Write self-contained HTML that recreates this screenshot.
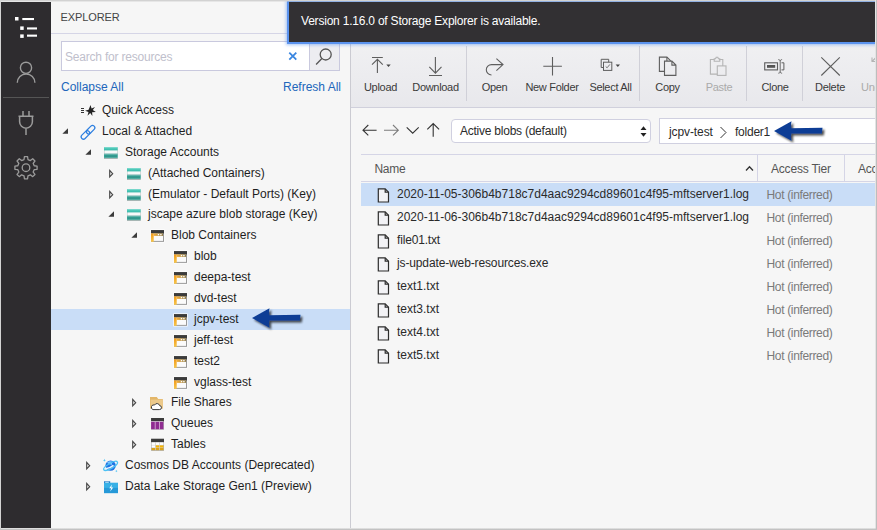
<!DOCTYPE html>
<html><head><meta charset="utf-8">
<style>
html,body{margin:0;padding:0;}
body{width:877px;height:530px;overflow:hidden;background:#f6f6f6;font-family:"Liberation Sans",sans-serif;font-size:12px;color:#1e1e1e;position:relative;}
.abs{position:absolute;}
#frameT{left:0;top:0;width:877px;height:2px;background:linear-gradient(#d2d2d2 0,#d2d2d2 50%,rgba(210,210,210,.45) 50%);}
#frameL{left:0;top:0;width:1px;height:530px;background:#d4d4d4;}
#frameR{left:875px;top:0;width:2px;height:530px;background:linear-gradient(90deg,#e4e4e4 0,#e4e4e4 45%,#bdbdbd 45%);}
#frameB{left:0;top:528px;width:877px;height:2px;background:linear-gradient(rgba(192,192,192,.45) 0,rgba(192,192,192,.45) 50%,#c2c2c2 50%);}
#act{left:1px;top:2px;width:50px;height:526px;background:#2e2c2f;}
#exp{left:51px;top:2px;width:299px;height:526px;background:#f6f6f6;}
#expHead{left:51px;top:2px;width:299px;height:31px;border-bottom:1px solid #d5d5e6;background:#f6f6f6;}
#expTitle{left:60.5px;top:11px;font-size:11px;color:#444;letter-spacing:-0.1px;}
#split{left:350px;top:2px;width:1px;height:526px;background:#cbcbd2;}
#search{left:61px;top:41px;width:249px;height:30px;border:1px solid #c9c9de;background:#fff;box-sizing:border-box;}
#search span{position:absolute;left:3px;top:8px;letter-spacing:-0.2px;color:#c0c0cc;font-size:12px;}
#sbtn{left:309px;top:41px;width:31px;height:30px;border:1px solid #c9c9de;background:#ededf1;box-sizing:border-box;}
.link{color:#2166bb;font-size:12px;}
.row{position:absolute;left:51px;width:299px;height:21px;}
.row .t{position:absolute;top:3px;font-size:12px;color:#1e1e1e;white-space:nowrap;}
.row.sel{background:#c9ddf7;}
.tw{position:absolute;top:6px;}
.ic{position:absolute;top:2px;}
#notif{left:289px;top:2px;width:588px;height:40px;background:#323033;box-shadow:0 0 0 2px #5b93ee,0 0 3px 3px rgba(91,147,238,.55);}
#notif span{position:absolute;left:12px;top:12px;color:#fff;font-size:12px;letter-spacing:-0.21px;white-space:nowrap;}
#tb{left:351px;top:44px;width:526px;height:63px;background:linear-gradient(#f0f0f2,#e8e8ec);border-bottom:1px solid #d0d0dc;}
.tbl{position:absolute;top:81px;font-size:11px;color:#3a3a3a;letter-spacing:-0.3px;white-space:nowrap;transform:translateX(-50%);}
.tbl.dis{color:#aaa;}
.sep{position:absolute;top:46px;width:1px;height:55px;background:#d0d0d8;}
.tbi{position:absolute;}
#main{left:362px;top:108px;width:515px;height:420px;background:#f6f6f6;}
#gut{left:351px;top:108px;width:11px;height:420px;background:#f6f6f6;}
.inp{position:absolute;top:119px;height:24px;border:1px solid #d0d0e0;background:#fff;box-sizing:border-box;border-radius:4px;font-size:12px;color:#2b2b2b;letter-spacing:-0.24px;white-space:nowrap;overflow:hidden;}
#th{left:361px;top:154px;width:516px;height:28px;border-top:1px solid #d5d5e6;border-bottom:1px solid #d5d5e6;box-sizing:border-box;}
.thc{position:absolute;top:162px;font-size:12px;color:#555;white-space:nowrap;}
.fr{position:absolute;left:361px;width:516px;height:23px;}
.fr.sel{background:#c9ddf7;}
.fr .n{position:absolute;left:36px;top:4px;font-size:12px;color:#2a2a2a;white-space:nowrap;}
.fr .a{position:absolute;left:405.500px;top:5px;font-size:12px;color:#7a7a7a;white-space:nowrap;letter-spacing:-0.34px;}
.fr svg{position:absolute;left:16.300px;top:4.500px;}
</style></head><body>
<div class="abs" id="act"></div>
<svg class="abs" style="left:1px;top:2px" width="50" height="200" viewBox="1 2 50 200" fill="none">
<g fill="#fff"><rect x="15" y="17" width="3.500" height="3.500"/><rect x="22.300" y="18" width="11.700" height="2.100"/><rect x="20.200" y="26.400" width="3.500" height="3.500"/><rect x="27" y="27.400" width="10" height="2.100"/><rect x="20.200" y="34.400" width="3.500" height="3.500"/><rect x="27" y="34.600" width="10" height="2.100"/></g>
<g stroke="#9b9b9b" stroke-width="1.400"><circle cx="26" cy="67.800" r="5.600"/><path d="M17.300 82.800a8.800 8.800 0 0 1 17.600 0"/></g>
<path d="M3 97.500h46" stroke="#555" stroke-width="1"/>
<g stroke="#9b9b9b" stroke-width="1.500"><path d="M23 111v5M29 111v5M18.500 116.300h15M19.600 116.300v5.500a6.400 6.400 0 0 0 12.800 0v-5.500M26 128.500v6.600"/></g>
<g stroke="#9b9b9b" stroke-width="1.300" stroke-linejoin="round"><circle cx="26" cy="167.700" r="3.800"/>
<path d="M24.04 159.53 L24.42 156.61 L27.58 156.61 L27.96 159.53 L30.39 160.54 L32.72 158.74 L34.96 160.98 L33.16 163.31 L34.17 165.74 L37.09 166.12 L37.09 169.28 L34.17 169.66 L33.16 172.09 L34.96 174.42 L32.72 176.66 L30.39 174.86 L27.96 175.87 L27.58 178.79 L24.42 178.79 L24.04 175.87 L21.61 174.86 L19.28 176.66 L17.04 174.42 L18.84 172.09 L17.83 169.66 L14.91 169.28 L14.91 166.12 L17.83 165.74 L18.84 163.31 L17.04 160.98 L19.28 158.74 L21.61 160.54Z"/></g>
</svg>
<div class="abs" id="exp"></div>
<div class="abs" id="expHead"></div>
<div class="abs" id="expTitle">EXPLORER</div>
<div class="abs" id="search"><span>Search for resources</span></div>
<div class="abs" id="sbtn"></div>
<svg class="abs" style="left:287px;top:50px" width="12" height="12" viewBox="0 0 12 12"><path d="M2.300 2.600l7 7M9.300 2.600l-7 7" stroke="#3a86e0" stroke-width="1.800" fill="none"/></svg>
<svg class="abs" style="left:314px;top:46px" width="20" height="20" viewBox="0 0 20 20" fill="none" stroke="#555" stroke-width="1.300"><circle cx="11.700" cy="8.500" r="5.500"/><path d="M7.900 12.500l-5.800 6"/></svg>
<div class="abs link" style="left:61px;top:80px;">Collapse All</div>
<div class="abs link" style="left:283px;top:80px;">Refresh All</div>
<!--TREE-->
<div class="row" style="top:100px"><svg class="ic" style="left:29px" width="17" height="16" viewBox="0 0 17 16"><g stroke="#333" stroke-width="1"><path d="M1 6.5h3M1 8.5h3M1 10.5h3"/></g><path d="M10.5 3l1.1 3.6 3.4-1.500-2.200 3 3 2-3.700.2.300 3.700-2.200-2.900-2.700 2.600 1-3.600-3.400-1.400 3.500-1z" fill="#222"/></svg><span class="t" style="left:51px">Quick Access</span></div>
<div class="row" style="top:121px"><svg class="tw" style="left:10px;top:6px" width="8" height="8" viewBox="0 0 8 8"><path d="M7 1.200v5.600H1.400z" fill="#3b3b3b"/></svg><svg class="ic" style="left:28px" width="17" height="17" viewBox="0 0 17 17"><g fill="none" stroke="#2d7fe0" stroke-width="1.250"><rect x="-2.300" y="-5" width="4.600" height="10" rx="2.300" transform="translate(11.600 6.700) rotate(45)"/><rect x="-2.300" y="-5" width="4.600" height="10" rx="2.300" transform="translate(6.400 11.900) rotate(45)"/></g></svg><span class="t" style="left:51px">Local &amp; Attached</span></div>
<div class="row" style="top:142px"><svg class="tw" style="left:33px;top:6px" width="8" height="8" viewBox="0 0 8 8"><path d="M7 1.200v5.600H1.400z" fill="#3b3b3b"/></svg><svg class="ic" style="left:51px" width="17" height="16" viewBox="0 0 17 16"><defs><linearGradient id="sg1" x1="0" y1="0" x2="0" y2="1"><stop offset="0" stop-color="#5fd3c4"/><stop offset="1" stop-color="#36b8a8"/></linearGradient><linearGradient id="sg2" x1="0" y1="0" x2="0" y2="1"><stop offset="0" stop-color="#2e9f93"/><stop offset="0.7" stop-color="#3db3a5"/><stop offset="1" stop-color="#8a9a98"/></linearGradient></defs><rect x="2" y="3.200" width="13.700" height="11.400" fill="#b9c3c2"/><rect x="2.500" y="3.200" width="12.700" height="11" fill="#f7f9f9"/><rect x="2" y="3.200" width="13.700" height="3.200" fill="url(#sg1)"/><rect x="2" y="9.600" width="13.700" height="5" fill="url(#sg2)"/><rect x="2" y="9.600" width="13.700" height="0.700" fill="#c9d2d1"/><rect x="2.500" y="11.700" width="12.700" height="0.800" fill="#2c7d76"/></svg><span class="t" style="left:74px">Storage Accounts</span></div>
<div class="row" style="top:163px"><svg class="tw" style="left:57px;top:4px" width="7" height="13" viewBox="0 0 7 13"><path d="M1.700 3.500l3 3.200-3 3.200z" fill="none" stroke="#484848" stroke-width="1.150"/></svg><svg class="ic" style="left:74px" width="17" height="16" viewBox="0 0 17 16"><defs><linearGradient id="sg1" x1="0" y1="0" x2="0" y2="1"><stop offset="0" stop-color="#5fd3c4"/><stop offset="1" stop-color="#36b8a8"/></linearGradient><linearGradient id="sg2" x1="0" y1="0" x2="0" y2="1"><stop offset="0" stop-color="#2e9f93"/><stop offset="0.7" stop-color="#3db3a5"/><stop offset="1" stop-color="#8a9a98"/></linearGradient></defs><rect x="2" y="3.200" width="13.700" height="11.400" fill="#b9c3c2"/><rect x="2.500" y="3.200" width="12.700" height="11" fill="#f7f9f9"/><rect x="2" y="3.200" width="13.700" height="3.200" fill="url(#sg1)"/><rect x="2" y="9.600" width="13.700" height="5" fill="url(#sg2)"/><rect x="2" y="9.600" width="13.700" height="0.700" fill="#c9d2d1"/><rect x="2.500" y="11.700" width="12.700" height="0.800" fill="#2c7d76"/></svg><span class="t" style="left:97px">(Attached Containers)</span></div>
<div class="row" style="top:184px"><svg class="tw" style="left:57px;top:4px" width="7" height="13" viewBox="0 0 7 13"><path d="M1.700 3.500l3 3.200-3 3.200z" fill="none" stroke="#484848" stroke-width="1.150"/></svg><svg class="ic" style="left:74px" width="17" height="16" viewBox="0 0 17 16"><defs><linearGradient id="sg1" x1="0" y1="0" x2="0" y2="1"><stop offset="0" stop-color="#5fd3c4"/><stop offset="1" stop-color="#36b8a8"/></linearGradient><linearGradient id="sg2" x1="0" y1="0" x2="0" y2="1"><stop offset="0" stop-color="#2e9f93"/><stop offset="0.7" stop-color="#3db3a5"/><stop offset="1" stop-color="#8a9a98"/></linearGradient></defs><rect x="2" y="3.200" width="13.700" height="11.400" fill="#b9c3c2"/><rect x="2.500" y="3.200" width="12.700" height="11" fill="#f7f9f9"/><rect x="2" y="3.200" width="13.700" height="3.200" fill="url(#sg1)"/><rect x="2" y="9.600" width="13.700" height="5" fill="url(#sg2)"/><rect x="2" y="9.600" width="13.700" height="0.700" fill="#c9d2d1"/><rect x="2.500" y="11.700" width="12.700" height="0.800" fill="#2c7d76"/></svg><span class="t" style="left:97px">(Emulator - Default Ports) (Key)</span></div>
<div class="row" style="top:204px"><svg class="tw" style="left:56px;top:6px" width="8" height="8" viewBox="0 0 8 8"><path d="M7 1.200v5.600H1.400z" fill="#3b3b3b"/></svg><svg class="ic" style="left:74px" width="17" height="16" viewBox="0 0 17 16"><defs><linearGradient id="sg1" x1="0" y1="0" x2="0" y2="1"><stop offset="0" stop-color="#5fd3c4"/><stop offset="1" stop-color="#36b8a8"/></linearGradient><linearGradient id="sg2" x1="0" y1="0" x2="0" y2="1"><stop offset="0" stop-color="#2e9f93"/><stop offset="0.7" stop-color="#3db3a5"/><stop offset="1" stop-color="#8a9a98"/></linearGradient></defs><rect x="2" y="3.200" width="13.700" height="11.400" fill="#b9c3c2"/><rect x="2.500" y="3.200" width="12.700" height="11" fill="#f7f9f9"/><rect x="2" y="3.200" width="13.700" height="3.200" fill="url(#sg1)"/><rect x="2" y="9.600" width="13.700" height="5" fill="url(#sg2)"/><rect x="2" y="9.600" width="13.700" height="0.700" fill="#c9d2d1"/><rect x="2.500" y="11.700" width="12.700" height="0.800" fill="#2c7d76"/></svg><span class="t" style="left:97px">jscape azure blob storage (Key)</span></div>
<div class="row" style="top:225px"><svg class="tw" style="left:79px;top:6px" width="8" height="8" viewBox="0 0 8 8"><path d="M7 1.200v5.600H1.400z" fill="#3b3b3b"/></svg><svg class="ic" style="left:98px" width="16" height="16" viewBox="0 0 16 16"><defs><linearGradient id="bg1" x1="0" y1="0" x2="0" y2="1"><stop offset="0" stop-color="#f09a1c"/><stop offset="1" stop-color="#f8c64a"/></linearGradient><linearGradient id="bg2" x1="0" y1="0" x2="1" y2="0"><stop offset="0" stop-color="#f3ae38"/><stop offset="0.45" stop-color="#c79a46"/><stop offset="1" stop-color="#8c7846"/></linearGradient></defs><rect x="1.300" y="2.400" width="14.400" height="13.100" fill="#fdfdfd"/><rect x="2" y="3.100" width="13" height="11.700" fill="#8f8f8f"/><rect x="2" y="6.300" width="12.100" height="7.600" fill="#fbfbfb"/><rect x="2" y="3.100" width="13" height="3.300" fill="#3b3b3b"/><rect x="2" y="6.400" width="2.700" height="8.400" fill="url(#bg1)"/><rect x="4.700" y="6.400" width="9.400" height="2.500" fill="url(#bg2)"/><rect x="8.800" y="7" width="1.400" height="1.300" fill="#fff"/><rect x="11.200" y="7" width="1.400" height="1.300" fill="#fff"/></svg><span class="t" style="left:120px">Blob Containers</span></div>
<div class="row" style="top:246px"><svg class="ic" style="left:121px" width="16" height="16" viewBox="0 0 16 16"><defs><linearGradient id="bg1" x1="0" y1="0" x2="0" y2="1"><stop offset="0" stop-color="#f09a1c"/><stop offset="1" stop-color="#f8c64a"/></linearGradient><linearGradient id="bg2" x1="0" y1="0" x2="1" y2="0"><stop offset="0" stop-color="#f3ae38"/><stop offset="0.45" stop-color="#c79a46"/><stop offset="1" stop-color="#8c7846"/></linearGradient></defs><rect x="1.300" y="2.400" width="14.400" height="13.100" fill="#fdfdfd"/><rect x="2" y="3.100" width="13" height="11.700" fill="#8f8f8f"/><rect x="2" y="6.300" width="12.100" height="7.600" fill="#fbfbfb"/><rect x="2" y="3.100" width="13" height="3.300" fill="#3b3b3b"/><rect x="2" y="6.400" width="2.700" height="8.400" fill="url(#bg1)"/><rect x="4.700" y="6.400" width="9.400" height="2.500" fill="url(#bg2)"/><rect x="8.800" y="7" width="1.400" height="1.300" fill="#fff"/><rect x="11.200" y="7" width="1.400" height="1.300" fill="#fff"/></svg><span class="t" style="left:143px">blob</span></div>
<div class="row" style="top:267px"><svg class="ic" style="left:121px" width="16" height="16" viewBox="0 0 16 16"><defs><linearGradient id="bg1" x1="0" y1="0" x2="0" y2="1"><stop offset="0" stop-color="#f09a1c"/><stop offset="1" stop-color="#f8c64a"/></linearGradient><linearGradient id="bg2" x1="0" y1="0" x2="1" y2="0"><stop offset="0" stop-color="#f3ae38"/><stop offset="0.45" stop-color="#c79a46"/><stop offset="1" stop-color="#8c7846"/></linearGradient></defs><rect x="1.300" y="2.400" width="14.400" height="13.100" fill="#fdfdfd"/><rect x="2" y="3.100" width="13" height="11.700" fill="#8f8f8f"/><rect x="2" y="6.300" width="12.100" height="7.600" fill="#fbfbfb"/><rect x="2" y="3.100" width="13" height="3.300" fill="#3b3b3b"/><rect x="2" y="6.400" width="2.700" height="8.400" fill="url(#bg1)"/><rect x="4.700" y="6.400" width="9.400" height="2.500" fill="url(#bg2)"/><rect x="8.800" y="7" width="1.400" height="1.300" fill="#fff"/><rect x="11.200" y="7" width="1.400" height="1.300" fill="#fff"/></svg><span class="t" style="left:143px">deepa-test</span></div>
<div class="row" style="top:288px"><svg class="ic" style="left:121px" width="16" height="16" viewBox="0 0 16 16"><defs><linearGradient id="bg1" x1="0" y1="0" x2="0" y2="1"><stop offset="0" stop-color="#f09a1c"/><stop offset="1" stop-color="#f8c64a"/></linearGradient><linearGradient id="bg2" x1="0" y1="0" x2="1" y2="0"><stop offset="0" stop-color="#f3ae38"/><stop offset="0.45" stop-color="#c79a46"/><stop offset="1" stop-color="#8c7846"/></linearGradient></defs><rect x="1.300" y="2.400" width="14.400" height="13.100" fill="#fdfdfd"/><rect x="2" y="3.100" width="13" height="11.700" fill="#8f8f8f"/><rect x="2" y="6.300" width="12.100" height="7.600" fill="#fbfbfb"/><rect x="2" y="3.100" width="13" height="3.300" fill="#3b3b3b"/><rect x="2" y="6.400" width="2.700" height="8.400" fill="url(#bg1)"/><rect x="4.700" y="6.400" width="9.400" height="2.500" fill="url(#bg2)"/><rect x="8.800" y="7" width="1.400" height="1.300" fill="#fff"/><rect x="11.200" y="7" width="1.400" height="1.300" fill="#fff"/></svg><span class="t" style="left:143px">dvd-test</span></div>
<div class="row sel" style="top:309px"><svg class="ic" style="left:121px" width="16" height="16" viewBox="0 0 16 16"><defs><linearGradient id="bg1" x1="0" y1="0" x2="0" y2="1"><stop offset="0" stop-color="#f09a1c"/><stop offset="1" stop-color="#f8c64a"/></linearGradient><linearGradient id="bg2" x1="0" y1="0" x2="1" y2="0"><stop offset="0" stop-color="#f3ae38"/><stop offset="0.45" stop-color="#c79a46"/><stop offset="1" stop-color="#8c7846"/></linearGradient></defs><rect x="1.300" y="2.400" width="14.400" height="13.100" fill="#fdfdfd"/><rect x="2" y="3.100" width="13" height="11.700" fill="#8f8f8f"/><rect x="2" y="6.300" width="12.100" height="7.600" fill="#fbfbfb"/><rect x="2" y="3.100" width="13" height="3.300" fill="#3b3b3b"/><rect x="2" y="6.400" width="2.700" height="8.400" fill="url(#bg1)"/><rect x="4.700" y="6.400" width="9.400" height="2.500" fill="url(#bg2)"/><rect x="8.800" y="7" width="1.400" height="1.300" fill="#fff"/><rect x="11.200" y="7" width="1.400" height="1.300" fill="#fff"/></svg><span class="t" style="left:143px">jcpv-test</span><svg style="position:absolute;left:199px;top:-3px;overflow:visible" width="56" height="26" viewBox="0 0 56 26"><defs><filter id="sh1" x="-20%" y="-20%" width="140%" height="160%"><feGaussianBlur in="SourceAlpha" stdDeviation="0.9"/><feOffset dx="1.500" dy="2"/><feComponentTransfer><feFuncA type="linear" slope="0.7"/></feComponentTransfer><feMerge><feMergeNode/><feMergeNode in="SourceGraphic"/></feMerge></filter></defs><path d="M2 12L19.500 2.300C18.900 5 18.900 7 19.300 9.200L50.500 8.800L49.800 14.600L19.300 14.400C18.900 17 18.900 19 19.500 21.700z" fill="#0e3d95" filter="url(#sh1)"/></svg></div>
<div class="row" style="top:330px"><svg class="ic" style="left:121px" width="16" height="16" viewBox="0 0 16 16"><defs><linearGradient id="bg1" x1="0" y1="0" x2="0" y2="1"><stop offset="0" stop-color="#f09a1c"/><stop offset="1" stop-color="#f8c64a"/></linearGradient><linearGradient id="bg2" x1="0" y1="0" x2="1" y2="0"><stop offset="0" stop-color="#f3ae38"/><stop offset="0.45" stop-color="#c79a46"/><stop offset="1" stop-color="#8c7846"/></linearGradient></defs><rect x="1.300" y="2.400" width="14.400" height="13.100" fill="#fdfdfd"/><rect x="2" y="3.100" width="13" height="11.700" fill="#8f8f8f"/><rect x="2" y="6.300" width="12.100" height="7.600" fill="#fbfbfb"/><rect x="2" y="3.100" width="13" height="3.300" fill="#3b3b3b"/><rect x="2" y="6.400" width="2.700" height="8.400" fill="url(#bg1)"/><rect x="4.700" y="6.400" width="9.400" height="2.500" fill="url(#bg2)"/><rect x="8.800" y="7" width="1.400" height="1.300" fill="#fff"/><rect x="11.200" y="7" width="1.400" height="1.300" fill="#fff"/></svg><span class="t" style="left:143px">jeff-test</span></div>
<div class="row" style="top:351px"><svg class="ic" style="left:121px" width="16" height="16" viewBox="0 0 16 16"><defs><linearGradient id="bg1" x1="0" y1="0" x2="0" y2="1"><stop offset="0" stop-color="#f09a1c"/><stop offset="1" stop-color="#f8c64a"/></linearGradient><linearGradient id="bg2" x1="0" y1="0" x2="1" y2="0"><stop offset="0" stop-color="#f3ae38"/><stop offset="0.45" stop-color="#c79a46"/><stop offset="1" stop-color="#8c7846"/></linearGradient></defs><rect x="1.300" y="2.400" width="14.400" height="13.100" fill="#fdfdfd"/><rect x="2" y="3.100" width="13" height="11.700" fill="#8f8f8f"/><rect x="2" y="6.300" width="12.100" height="7.600" fill="#fbfbfb"/><rect x="2" y="3.100" width="13" height="3.300" fill="#3b3b3b"/><rect x="2" y="6.400" width="2.700" height="8.400" fill="url(#bg1)"/><rect x="4.700" y="6.400" width="9.400" height="2.500" fill="url(#bg2)"/><rect x="8.800" y="7" width="1.400" height="1.300" fill="#fff"/><rect x="11.200" y="7" width="1.400" height="1.300" fill="#fff"/></svg><span class="t" style="left:143px">test2</span></div>
<div class="row" style="top:372px"><svg class="ic" style="left:121px" width="16" height="16" viewBox="0 0 16 16"><defs><linearGradient id="bg1" x1="0" y1="0" x2="0" y2="1"><stop offset="0" stop-color="#f09a1c"/><stop offset="1" stop-color="#f8c64a"/></linearGradient><linearGradient id="bg2" x1="0" y1="0" x2="1" y2="0"><stop offset="0" stop-color="#f3ae38"/><stop offset="0.45" stop-color="#c79a46"/><stop offset="1" stop-color="#8c7846"/></linearGradient></defs><rect x="1.300" y="2.400" width="14.400" height="13.100" fill="#fdfdfd"/><rect x="2" y="3.100" width="13" height="11.700" fill="#8f8f8f"/><rect x="2" y="6.300" width="12.100" height="7.600" fill="#fbfbfb"/><rect x="2" y="3.100" width="13" height="3.300" fill="#3b3b3b"/><rect x="2" y="6.400" width="2.700" height="8.400" fill="url(#bg1)"/><rect x="4.700" y="6.400" width="9.400" height="2.500" fill="url(#bg2)"/><rect x="8.800" y="7" width="1.400" height="1.300" fill="#fff"/><rect x="11.200" y="7" width="1.400" height="1.300" fill="#fff"/></svg><span class="t" style="left:143px">vglass-test</span></div>
<div class="row" style="top:392px"><svg class="tw" style="left:80px;top:4px" width="7" height="13" viewBox="0 0 7 13"><path d="M1.700 3.500l3 3.200-3 3.200z" fill="none" stroke="#484848" stroke-width="1.150"/></svg><svg class="ic" style="left:98px" width="16" height="18" viewBox="0 0 16 18"><g transform="translate(0 1)"><path d="M1 2.100h6.800l1.400 1.800h4.600v9.500H1z" fill="#e3b669"/><path d="M1.600 4.600h12.200v8.800H1.600z" fill="#ecc98a"/><path d="M4 14.600h6.300a2 2 0 0 0 .3-4 2.700 2.700 0 0 0-5-.6 2.300 2.300 0 0 0-1.600 4.600z" fill="#fff" stroke="#3a3a3a" stroke-width="1"/></g></svg><span class="t" style="left:120px">File Shares</span></div>
<div class="row" style="top:413px"><svg class="tw" style="left:80px;top:4px" width="7" height="13" viewBox="0 0 7 13"><path d="M1.700 3.500l3 3.200-3 3.200z" fill="none" stroke="#484848" stroke-width="1.150"/></svg><svg class="ic" style="left:98px" width="16" height="16" viewBox="0 0 16 16"><rect x="2.100" y="3" width="12.900" height="11.600" fill="#9a9a9a"/><rect x="2.100" y="3" width="12.900" height="3.300" fill="#3b3b3b"/><rect x="2.100" y="6.300" width="12.300" height="7.900" fill="#e6cfe6"/><rect x="2.100" y="6.900" width="3.700" height="7.300" fill="#8f2d91"/><rect x="6.500" y="6.900" width="3.500" height="7.300" fill="#8f2d91"/><rect x="10.700" y="6.900" width="3.700" height="7.300" fill="#8f2d91"/></svg><span class="t" style="left:120px">Queues</span></div>
<div class="row" style="top:434px"><svg class="tw" style="left:80px;top:4px" width="7" height="13" viewBox="0 0 7 13"><path d="M1.700 3.500l3 3.200-3 3.200z" fill="none" stroke="#484848" stroke-width="1.150"/></svg><svg class="ic" style="left:98px" width="16" height="16" viewBox="0 0 16 16"><rect x="2.100" y="2.800" width="12.900" height="11.900" fill="#9a9a9a"/><rect x="2.100" y="2.800" width="12.900" height="3.300" fill="#3b3b3b"/><rect x="2.600" y="6.100" width="11.900" height="8.100" fill="#cfcfcf"/><g fill="#fff"><rect x="2.600" y="6.600" width="3.500" height="2.300"/><rect x="6.800" y="6.600" width="3.500" height="2.300"/><rect x="11" y="6.600" width="3.500" height="2.300"/><rect x="2.600" y="9.400" width="3.500" height="2.100"/></g><g fill="#f7b500"><rect x="6.800" y="9.400" width="3.500" height="2.100"/><rect x="11" y="9.400" width="3.500" height="2.100"/></g><g fill="#dba31c"><rect x="2.600" y="12" width="3.500" height="2.200"/><rect x="6.800" y="12" width="3.500" height="2.200"/><rect x="11" y="12" width="3.500" height="2.200"/></g></svg><span class="t" style="left:120px">Tables</span></div>
<div class="row" style="top:455px"><svg class="tw" style="left:34px;top:4px" width="7" height="13" viewBox="0 0 7 13"><path d="M1.700 3.500l3 3.200-3 3.200z" fill="none" stroke="#484848" stroke-width="1.150"/></svg><svg class="ic" style="left:51px" width="17" height="17" viewBox="0 0 17 17"><circle cx="8.600" cy="8.600" r="5.200" fill="#2272e2"/><path d="M5 5.800c1.600-1.700 4.200-2 6-.8-1.200.7-1.400 1.800-.5 2.500-1.700.5-3.700 0-5.500-1.700z" fill="#7cc4ff"/><ellipse cx="8.600" cy="8.900" rx="7.800" ry="2.500" transform="rotate(-30 8.600 8.900)" fill="none" stroke="#4cc2f4" stroke-width="1.300"/><path d="M3.400 11.300c2 .4 5-.6 7.600-2.600" stroke="#eaf6ff" stroke-width="1.500" fill="none" stroke-linecap="round"/><path d="M2.400 1.800l.5 1.100 1 .4-1 .4-.5 1.100-.4-1.100-1.100-.4 1.100-.4z" fill="#4cc2f4"/><path d="M14.300 12.800l.4.900.9.300-.9.400-.4.900-.3-.9-.9-.4.900-.3z" fill="#4cc2f4"/></svg><span class="t" style="left:74px">Cosmos DB Accounts (Deprecated)</span></div>
<div class="row" style="top:476px"><svg class="tw" style="left:34px;top:4px" width="7" height="13" viewBox="0 0 7 13"><path d="M1.700 3.500l3 3.200-3 3.200z" fill="none" stroke="#484848" stroke-width="1.150"/></svg><svg class="ic" style="left:52px" width="16" height="17" viewBox="0 0 16 17"><g transform="translate(0 0.700)"><path d="M1 2.600h6.200v2H1z" fill="#1b74c4"/><rect x="2.200" y="3.100" width="3.600" height="1.100" fill="#dbeefb"/><path d="M1 4h14v10.400H1z" fill="#38b0e6"/><path d="M1 9.200h14v5.200H1z" fill="#2699d8"/><path d="M8.900 5.800L6.300 9.500h1.900l-1 3.300 3-4.100H8.300z" fill="#fff"/></g></svg><span class="t" style="left:74px">Data Lake Storage Gen1 (Preview)</span></div>
<!--/TREE-->
<div class="abs" id="split"></div>
<div class="abs" id="gut"></div>
<div class="abs" id="main"></div>
<div class="abs" id="tb"></div>
<!--TOOLBAR-->
<svg class="abs" style="left:351px;top:44px" width="526" height="54" viewBox="351 44 526 54" fill="none" stroke="#5e5e5e" stroke-width="1.1"><path d="M372 57.500h10.800M377.400 59.300v13.600M372 64.700l5.400-5.400 5.400 5.400"/><path d="M386.300 64.600h4.400l-2.200 2.400z" fill="#444" stroke="none"/><path d="M435.400 57v16M429.300 66.900l6.100 6.200 6.100-6.200M429 75.500h13"/><path d="M496.400 58.600l6.600 6-6.600 6M503 64.600h-11.500a5.200 5.200 0 0 0 0 10.400"/><path d="M543.300 66.300h18.600M552.500 57v18.500"/><path d="M603.500 67.500h-2.300v-8.200h7.500v2.900" stroke-width="1"/><rect x="603.500" y="62.200" width="8.300" height="8.200" stroke-width="1"/><path d="M605.700 66.500l1.400 1.300 2.800-3.400" stroke="#777" stroke-width="1"/><path d="M615.600 64.600h4.400l-2.200 2.400z" fill="#444" stroke="none"/><path d="M664.400 71.400h-5v-14.300h7.500l3.800 3.800" /><path d="M664.500 61.100h7.400l4 4v10.300h-11.400z M671.900 61.100v4h4"/><path d="M666.900 57.100v3.800"/><g stroke="#b4b4b4"><path d="M717.300 74.100h-6.900v-14.600h3.800M719 59.500h3.800v6.400"/><path d="M714.200 61.300v-2.600h1.400l.6-1.500h1.600l.6 1.500h1.400v2.600z"/><rect x="717.300" y="65.900" width="8.700" height="9.500"/></g><rect x="764.700" y="62.800" width="12.800" height="7.100"/><rect x="767" y="65" width="8.200" height="2.800" fill="#555" stroke="none"/><path d="M778.300 59.600c1.300 0 1.900.6 1.900 1.600v10.400c0 1-.6 1.600-1.900 1.600M782.100 59.600c-1.300 0-1.900.6-1.900 1.600M782.100 73.200c-1.300 0-1.900-.6-1.900-1.600" stroke-width="0.9"/><path d="M781.500 62.800h2.400v7.100h-2.400" stroke-width="1"/><path d="M821.300 57.300l18.500 18.200M839.800 57.300l-18.500 18.200"/><g stroke="#b4b4b4"><path d="M872 57.500v4h4M872 61.500l4-4"/></g></svg>
<div class="sep" style="left:466px"></div>
<div class="sep" style="left:639px"></div>
<div class="sep" style="left:746px"></div>
<div class="sep" style="left:802px"></div>
<div class="tbl" style="left:380.5px">Upload</div>
<div class="tbl" style="left:435.5px">Download</div>
<div class="tbl" style="left:494.5px">Open</div>
<div class="tbl" style="left:552px">New Folder</div>
<div class="tbl" style="left:610.5px">Select All</div>
<div class="tbl" style="left:667.5px">Copy</div>
<div class="tbl dis" style="left:719px">Paste</div>
<div class="tbl" style="left:775px">Clone</div>
<div class="tbl" style="left:830px">Delete</div>
<div class="tbl dis" style="left:861px;transform:none">Undelete</div>
<!--/TOOLBAR-->
<div class="abs" id="notif"><span>Version 1.16.0 of Storage Explorer is available.</span></div>
<!--NAV-->
<svg class="abs" style="left:360px;top:120px" width="84" height="22" viewBox="360 120 84 22" fill="none" stroke-width="1.1"><path d="M363 130.200h13.600M368.300 125l-5.300 5.200 5.300 5.200" stroke="#333"/><path d="M384 130.200h14M393 125l5.300 5.200-5.300 5.200" stroke="#7c7c7c"/><path d="M406.700 127.400l6 5.800 6-5.800" stroke="#333"/><path d="M433.200 123.500v13.200M427.300 129.400l5.900-5.900 5.900 5.900" stroke="#333"/></svg><div class="inp" style="left:451px;width:200px;height:24px"><span style="position:absolute;left:8px;top:4px">Active blobs (default)</span><svg style="position:absolute;left:187px;top:4.500px" width="9" height="13" viewBox="0 0 9 13"><path d="M1.500 5l3-3.800 3 3.800zM1.500 8l3 3.800 3-3.800z" fill="#222"/></svg></div><div class="inp" style="left:659px;top:118px;height:26px;width:230px;border-radius:0;letter-spacing:-0.1px"><span style="position:absolute;left:9px;top:6px">jcpv-test</span><svg style="position:absolute;left:59px;top:7px" width="9" height="13" viewBox="0 0 9 13"><path d="M1.500 1l5.500 5.500-5.500 5.500" fill="none" stroke="#333" stroke-width="1"/></svg><span style="position:absolute;left:75px;top:6px;letter-spacing:-0.24px">folder1</span><svg style="position:absolute;left:112px;top:0px;overflow:visible" width="56" height="26" viewBox="0 0 56 26"><path d="M2 12L19.500 2.300C18.900 5 18.900 7 19.300 9.200L50.500 8.800L49.800 14.600L19.300 14.400C18.900 17 18.900 19 19.500 21.700z" fill="#0e3d95" filter="url(#sh1)"/></svg></div>
<!--/NAV-->
<!--TABLE-->
<div class="abs" id="th"></div>
<div class="thc" style="left:374.500px;letter-spacing:-0.3px">Name</div>
<svg class="abs" style="left:745px;top:165px" width="9" height="7" viewBox="0 0 9 7"><path d="M1 5.500l3.500-3.800 3.500 3.800" fill="none" stroke="#333" stroke-width="1.3"/></svg>
<div class="abs" style="left:757px;top:155px;width:1px;height:27px;background:#d5d5e6"></div>
<div class="abs" style="left:844px;top:155px;width:1px;height:27px;background:#d5d5e6"></div>
<div class="thc" style="left:771px;letter-spacing:-0.2px">Access Tier</div>
<div class="thc" style="left:858px;letter-spacing:-0.2px">Access Tier Last Modified</div>
<div class="fr sel" style="top:183px"><svg width="13" height="15" viewBox="0 0 13 15"><path d="M1.300 0.900h6.900l3.300 3.300v9.800H1.300z" fill="#f2f2f5" stroke="#2c2c2c" stroke-width="1.200"/><path d="M8.200 0.900v3.300h3.300" fill="none" stroke="#2c2c2c" stroke-width="1.200"/></svg><span class="n">2020-11-05-306b4b718c7d4aac9294cd89601c4f95-mftserver1.log</span><span class="a">Hot (inferred)</span></div>
<div class="fr" style="top:206px"><svg width="13" height="15" viewBox="0 0 13 15"><path d="M1.300 0.900h6.900l3.300 3.300v9.800H1.300z" fill="#f2f2f5" stroke="#2c2c2c" stroke-width="1.200"/><path d="M8.200 0.900v3.300h3.300" fill="none" stroke="#2c2c2c" stroke-width="1.200"/></svg><span class="n">2020-11-06-306b4b718c7d4aac9294cd89601c4f95-mftserver1.log</span><span class="a">Hot (inferred)</span></div>
<div class="fr" style="top:229px"><svg width="13" height="15" viewBox="0 0 13 15"><path d="M1.300 0.900h6.900l3.300 3.300v9.800H1.300z" fill="#f2f2f5" stroke="#2c2c2c" stroke-width="1.200"/><path d="M8.200 0.900v3.300h3.300" fill="none" stroke="#2c2c2c" stroke-width="1.200"/></svg><span class="n" style="letter-spacing:-0.17px">file01.txt</span><span class="a">Hot (inferred)</span></div>
<div class="fr" style="top:252px"><svg width="13" height="15" viewBox="0 0 13 15"><path d="M1.300 0.900h6.900l3.300 3.300v9.800H1.300z" fill="#f2f2f5" stroke="#2c2c2c" stroke-width="1.200"/><path d="M8.200 0.900v3.300h3.300" fill="none" stroke="#2c2c2c" stroke-width="1.200"/></svg><span class="n" style="letter-spacing:-0.13px">js-update-web-resources.exe</span><span class="a">Hot (inferred)</span></div>
<div class="fr" style="top:275px"><svg width="13" height="15" viewBox="0 0 13 15"><path d="M1.300 0.900h6.900l3.300 3.300v9.800H1.300z" fill="#f2f2f5" stroke="#2c2c2c" stroke-width="1.200"/><path d="M8.200 0.900v3.300h3.300" fill="none" stroke="#2c2c2c" stroke-width="1.200"/></svg><span class="n">text1.txt</span><span class="a">Hot (inferred)</span></div>
<div class="fr" style="top:298px"><svg width="13" height="15" viewBox="0 0 13 15"><path d="M1.300 0.900h6.900l3.300 3.300v9.800H1.300z" fill="#f2f2f5" stroke="#2c2c2c" stroke-width="1.200"/><path d="M8.200 0.900v3.300h3.300" fill="none" stroke="#2c2c2c" stroke-width="1.200"/></svg><span class="n">text3.txt</span><span class="a">Hot (inferred)</span></div>
<div class="fr" style="top:321px"><svg width="13" height="15" viewBox="0 0 13 15"><path d="M1.300 0.900h6.900l3.300 3.300v9.800H1.300z" fill="#f2f2f5" stroke="#2c2c2c" stroke-width="1.200"/><path d="M8.200 0.900v3.300h3.300" fill="none" stroke="#2c2c2c" stroke-width="1.200"/></svg><span class="n">text4.txt</span><span class="a">Hot (inferred)</span></div>
<div class="fr" style="top:344px"><svg width="13" height="15" viewBox="0 0 13 15"><path d="M1.300 0.900h6.900l3.300 3.300v9.800H1.300z" fill="#f2f2f5" stroke="#2c2c2c" stroke-width="1.200"/><path d="M8.200 0.900v3.300h3.300" fill="none" stroke="#2c2c2c" stroke-width="1.200"/></svg><span class="n">text5.txt</span><span class="a">Hot (inferred)</span></div>
<!--/TABLE-->
<div class="abs" id="frameT"></div><div class="abs" id="frameL"></div><div class="abs" id="frameR"></div><div class="abs" id="frameB"></div>
</body></html>
